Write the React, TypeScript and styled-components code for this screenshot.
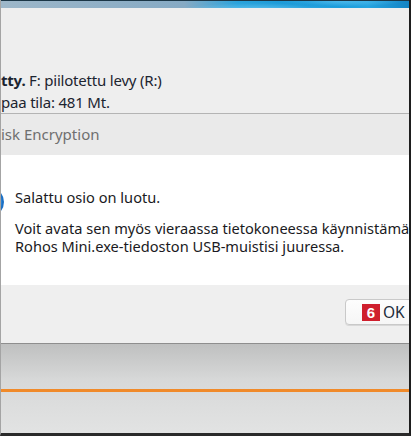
import React from "react";
import styled, { createGlobalStyle } from "styled-components";

const GlobalStyle = createGlobalStyle`
  html, body { margin: 0; padding: 0; background: #ffffff; }
  body { font-family: "Noto Sans", "Open Sans", sans-serif; }
`;

const Frame = styled.div`
  width: 411px;
  height: 436px;
  box-sizing: border-box;
  display: flex;
  flex-direction: column;
  overflow: hidden;
  border-right: 2px solid #1e1e1e;
  border-left: 1px solid #a4a4a4;
  border-bottom: 3px solid #2a2a2a;
  background: #eeeeee;
`;

const Banner = styled.div`
  flex: 0 0 8px;
  box-sizing: border-box;
  border-top: 1px solid #1b3646;
  background:
    radial-gradient(ellipse 120px 10px at 260px 9px, rgba(140, 220, 255, 0.55), rgba(140, 220, 255, 0) 70%),
    radial-gradient(ellipse 90px 8px at 340px 0px, rgba(120, 210, 250, 0.5), rgba(120, 210, 250, 0) 70%),
    linear-gradient(90deg, #9db7c9 0%, #86aac4 45%, #2aa3dc 58%, #1496d6 75%, #25a4e0 90%, #1584c4 100%);
`;

const InfoArea = styled.div`
  flex: 0 0 105px;
  box-sizing: border-box;
  padding-top: 61px;
  background: #eeeeee;
  font-family: "Noto Sans", sans-serif;
  font-size: 15px;
  line-height: 22px;
  color: #1c2430;
`;

const InfoLine = styled.div`
  white-space: nowrap;
  letter-spacing: -0.2px;
  b { font-weight: 700; }
`;

const Dialog = styled.div`
  flex: 0 0 229px;
  display: flex;
  flex-direction: column;
  border-top: 1px solid #b4b4b4;
  border-bottom: 1px solid #8e8e8e;
`;

const TitleBar = styled.div`
  flex: 0 0 41px;
  display: flex;
  align-items: center;
  background: #eaeaea;
  color: #6f6f6f;
  font-size: 15px;
  white-space: nowrap;
  padding-bottom: 1px;
  box-sizing: border-box;
`;

const Body = styled.div`
  flex: 0 0 130px;
  display: flex;
  align-items: flex-start;
  background: #ffffff;
  padding-top: 31px;
  box-sizing: border-box;
`;

const Icon = styled.svg`
  flex: 0 0 auto;
  margin-left: -28px;
  margin-top: 0px;
  margin-right: 10px;
`;

const TextCol = styled.div`
  display: flex;
  flex-direction: column;
  color: #1a1a22;
  white-space: nowrap;
`;

const Heading = styled.div`
  line-height: 22px;
  font-size: 14.6px;
  margin-bottom: 12px;
`;

const Para = styled.div`
  line-height: 17.5px;
  font-size: 14.6px;
`;

const Footer = styled.div`
  flex: 1 1 auto;
  display: flex;
  justify-content: flex-end;
  align-items: flex-start;
  background: #efefef;
  padding-top: 14px;
  box-sizing: border-box;
`;

const OkButton = styled.div`
  width: 80px;
  height: 26px;
  box-sizing: border-box;
  margin-right: -16px;
  display: flex;
  align-items: center;
  gap: 3px;
  padding-left: 16px;
  background: linear-gradient(#fdfdfd, #f6f6f6);
  border: 1px solid #c9c9c9;
  border-radius: 4px;
  box-shadow: 0 1px 0 #d8d8d8;
  font-size: 15.5px;
  color: #1d2b3a;
`;

const Badge = styled.span`
  width: 18px;
  height: 17px;
  display: inline-flex;
  align-items: center;
  justify-content: center;
  background: #cf1f2d;
  color: #ffffff;
  font-family: "Liberation Sans", Arial, sans-serif;
  font-weight: 700;
  font-size: 15px;
  line-height: 1;
`;

const BottomArea = styled.div`
  flex: 1 1 auto;
  display: flex;
  flex-direction: column;
  background: linear-gradient(#bfc0c0 0%, #d7d8d8 40%, #e2e3e3 100%);
`;

const Spacer = styled.div<{ $h: number }>`
  flex: 0 0 ${(p) => p.$h}px;
`;

const OrangeLine = styled.div`
  flex: 0 0 3px;
  background: #f08a2a;
`;

export default function App() {
  return (
    <>
      <GlobalStyle />
      <Frame>
        <Banner />
        <InfoArea>
          <InfoLine>
            <b>tty.</b> F: piilotettu levy (R:)
          </InfoLine>
          <InfoLine>paa tila: 481 Mt.</InfoLine>
        </InfoArea>
        <Dialog>
          <TitleBar>isk Encryption</TitleBar>
          <Body>
            <Icon width="32" height="32" viewBox="0 0 32 32">
              <circle cx="16" cy="16" r="15" fill="#1b6fc4" />
              <circle cx="16" cy="16" r="13" fill="#2a84d6" />
            </Icon>
            <TextCol>
              <Heading>Salattu osio on luotu.</Heading>
              <Para>Voit avata sen myös vieraassa tietokoneessa käynnistämällä</Para>
              <Para>Rohos Mini.exe-tiedoston USB-muistisi juuressa.</Para>
            </TextCol>
          </Body>
          <Footer>
            <OkButton>
              <Badge>6</Badge>
              OK
            </OkButton>
          </Footer>
        </Dialog>
        <BottomArea>
          <Spacer $h={45} />
          <OrangeLine />
        </BottomArea>
      </Frame>
    </>
  );
}
